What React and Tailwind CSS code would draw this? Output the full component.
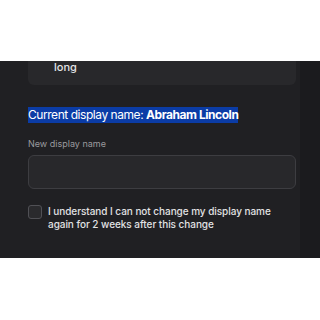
export default function App() {
  return (
    <div className="w-[320px] h-[320px] bg-white flex flex-col" style={{ fontFamily: 'Inter, "Noto Sans", sans-serif' }}>
      <div className="h-[61px] shrink-0" />
      <div className="h-[197px] shrink-0 flex bg-[#1b1b1e]">
        <div className="w-[300px] bg-[#202023] pl-[28px] pr-[4px] flex flex-col">
          {/* previous card, cut off at the top */}
          <div className="h-[24px] bg-[#28282b] rounded-b-[6px] pl-[26px]">
            <span className="block text-[11px] text-[#e4e4e6] font-medium leading-[12px]">long</span>
          </div>

          <div className="mt-[22px] h-[16px] flex items-center">
            <span className="bg-[#0b3ca6] text-white text-[12px] tracking-[-0.45px] leading-[16px] whitespace-nowrap">
              Current display name: <span className="font-bold">Abraham Lincoln</span>
            </span>
          </div>

          <label className="mt-[15px] text-[9px] leading-[12px] text-[#9a9a9e]">New display name</label>
          <div className="mt-[5px] h-[34px] rounded-[6px] bg-[#28282b] border border-[#3d3d41]" />

          <div className="mt-[16px] flex items-start gap-[6px]">
            <div className="w-[14px] h-[14px] shrink-0 rounded-[3px] border border-[#505055] bg-[#2a2a2d]" />
            <p className="text-[10px] leading-[13px] text-[#e2e2e4] tracking-[-0.05px] whitespace-nowrap font-medium">
              I understand I can not change my display name
              <br />
              again for 2 weeks after this change
            </p>
          </div>
        </div>
        <div className="flex-1" />
      </div>
    </div>
  );
}
